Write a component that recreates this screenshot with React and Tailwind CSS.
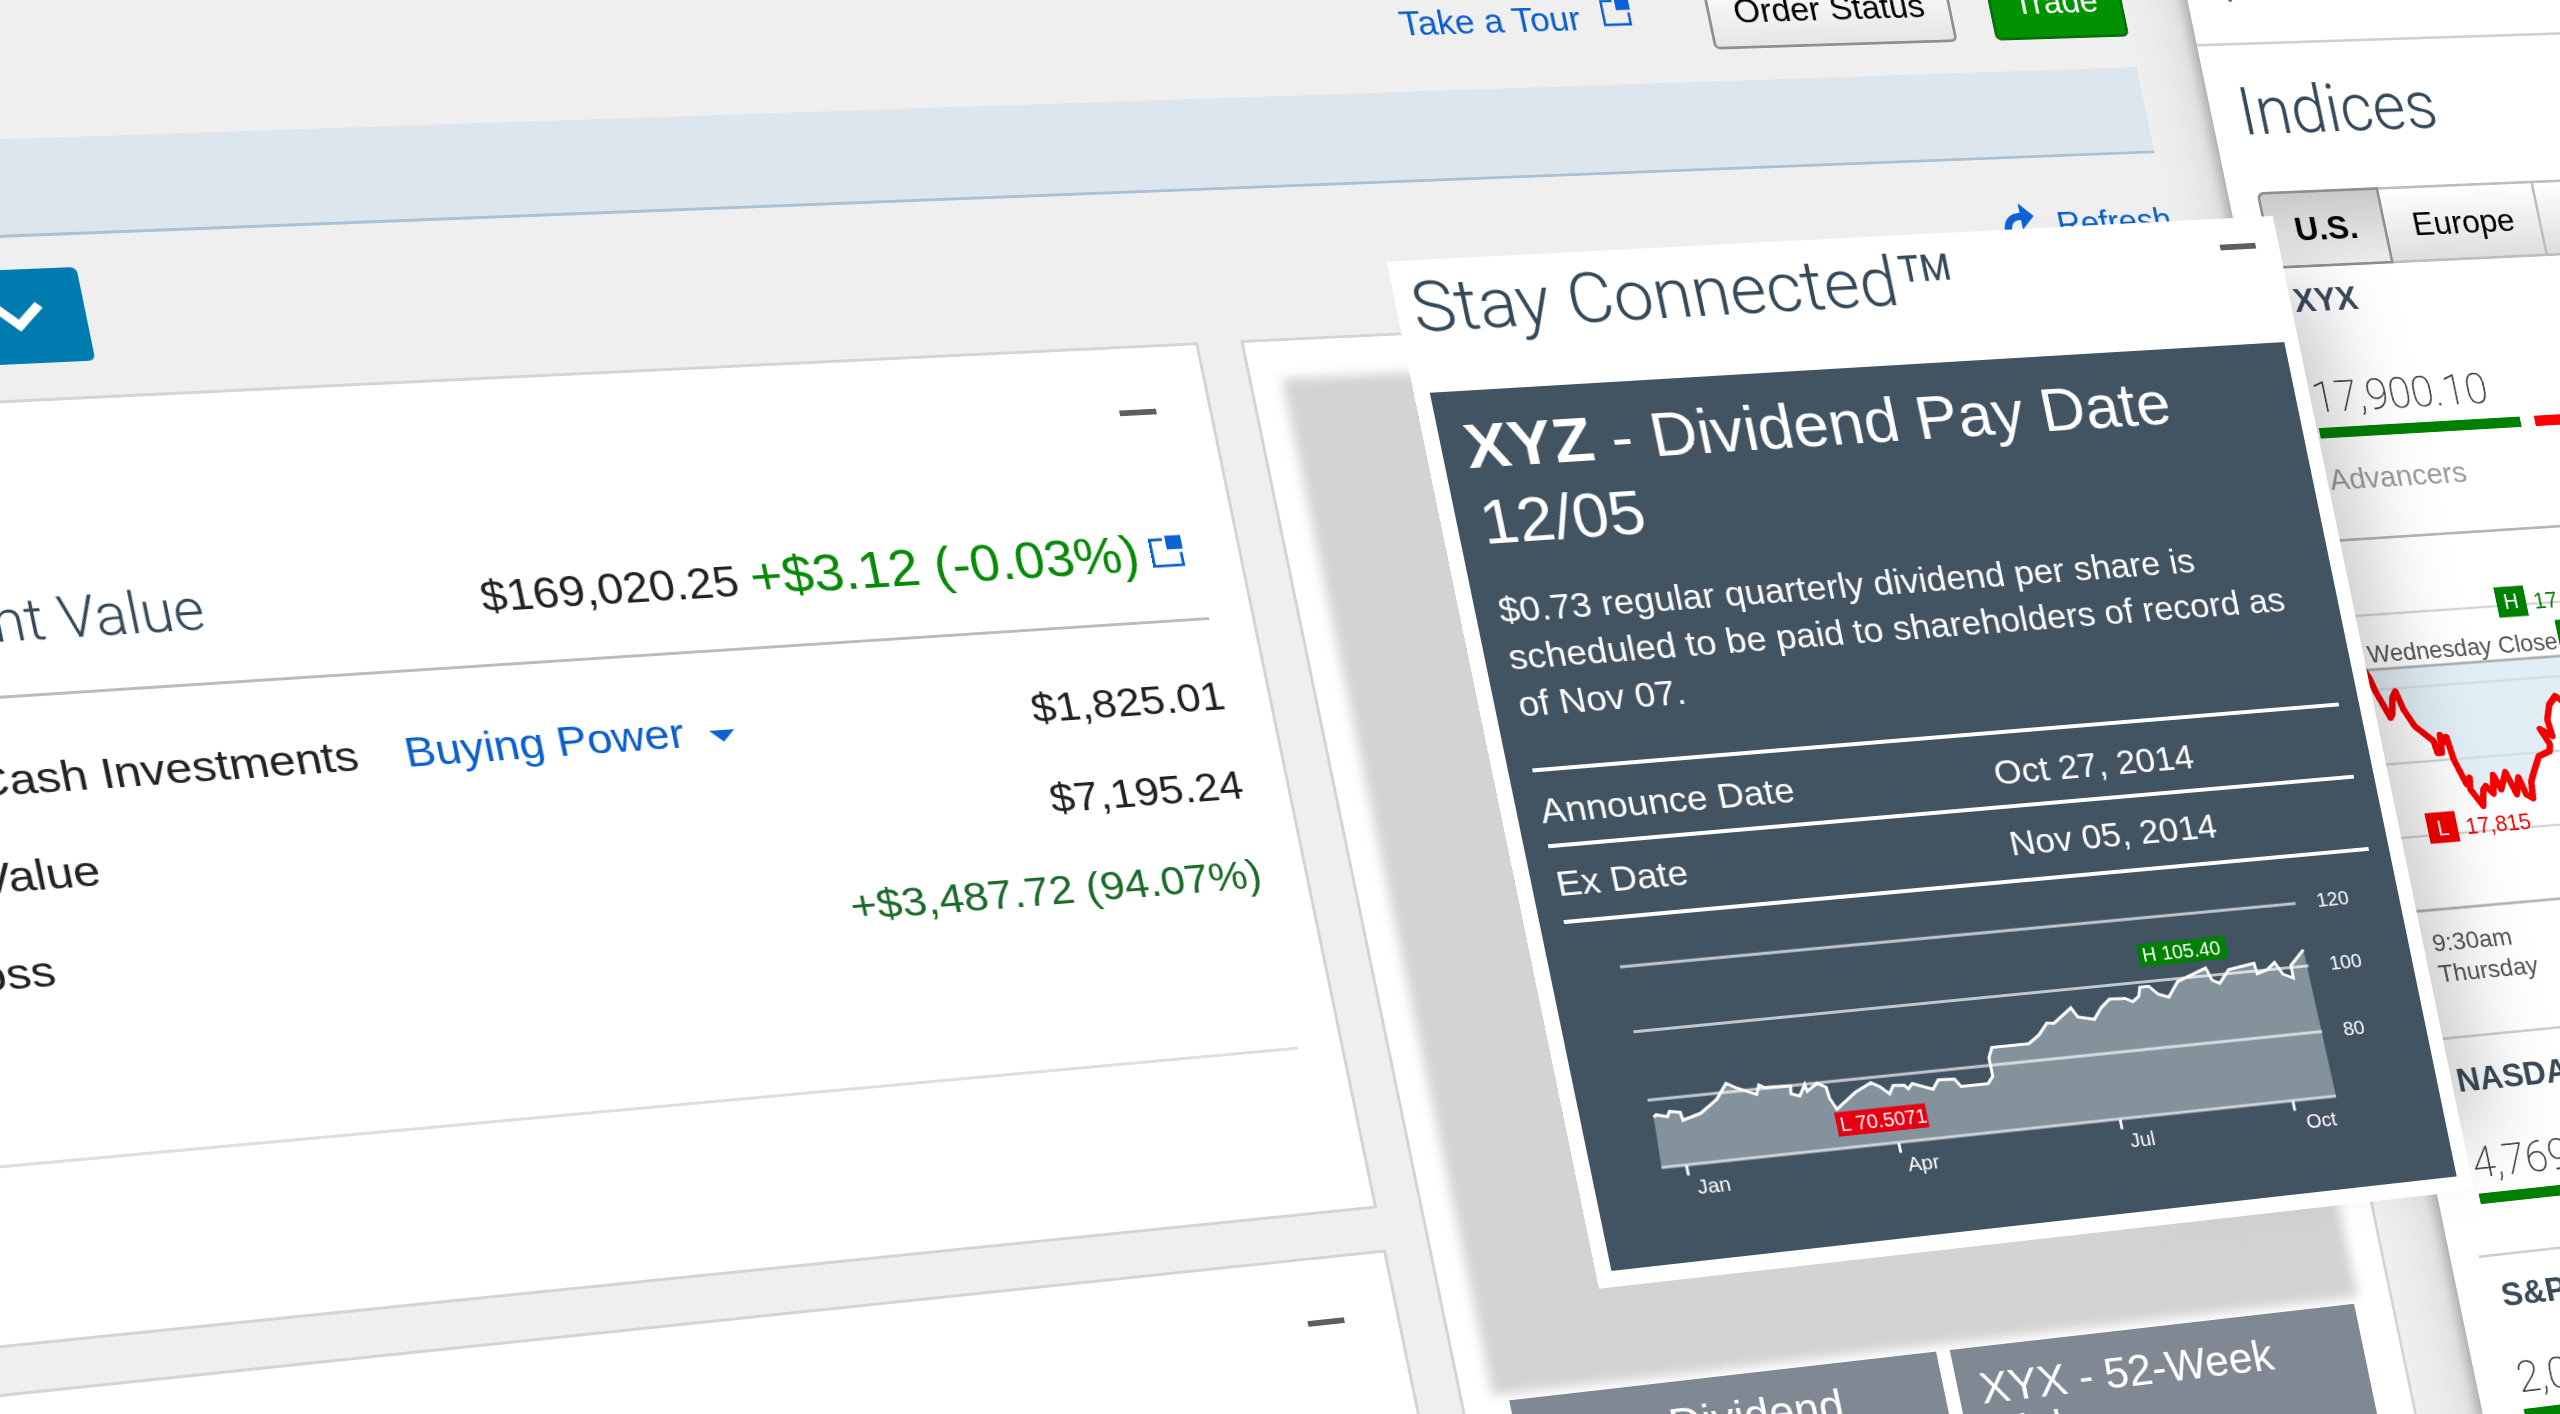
import React from "react";

/* Solves the homography that carries a w × h box (starting at x = left) onto four screen corners. */
function projection(left, w, h, corners) {
  const source = [[left, 0], [left + w, 0], [left + w, h], [left, h]];
  const rows = [];
  source.forEach(([x, y], i) => {
    const [u, v] = corners[i];
    rows.push([x, y, 1, 0, 0, 0, -u * x, -u * y, u]);
    rows.push([0, 0, 0, x, y, 1, -v * x, -v * y, v]);
  });
  for (let c = 0; c < 8; c++) {
    let p = c;
    for (let r = c + 1; r < 8; r++) if (Math.abs(rows[r][c]) > Math.abs(rows[p][c])) p = r;
    [rows[c], rows[p]] = [rows[p], rows[c]];
    for (let r = 0; r < 8; r++) {
      if (r === c) continue;
      const f = rows[r][c] / rows[c][c];
      for (let k = c; k < 9; k++) rows[r][k] -= f * rows[c][k];
    }
  }
  const [a, b, c, d, e, f, g, i] = rows.map((r, n) => r[8] / r[n]);
  return `matrix3d(${[a, d, 0, g, b, e, 0, i, 0, 0, 1, 0, c, f, 0, 1].join(",")})`;
}

const PAGE = projection(300, 2200, 1470, [[0, 0], [2175.5, -56.5], [2444.35, 1230.5], [300.7, 1466.85]]);
const CARD = projection(0, 880, 1027, [[1386.6, 261.7], [2272.7, 216], [2474, 1190], [1599, 1288.7]]);

const Minimize = ({ className = "" }) => <div className={`h-[6px] w-[37px] bg-[#5e5e5e] ${className}`} />;

const PopOut = ({ className = "" }) => (
  <svg viewBox="0 0 35 35" className={className} fill="none">
    <path d="M15 4H1.5V33.5H32.5V19" stroke="#0a5fce" strokeWidth="3" />
    <rect x="18" y="0" width="17" height="15.5" fill="#0a62d6" />
  </svg>
);

function Header() {
  return (
    <header className="flex h-[139px] items-start justify-end pr-[75px] pt-[22px] text-[37px]">
      <span className="mr-[24px] mt-[3px] leading-[81px] text-[#0b5fcc]">Take a Tour</span>
      <PopOut className="mr-[82px] mt-[21px] h-[32px] w-[31px]" />
      <button className="mr-[43px] h-[82px] w-[268px] rounded-[7px] border-[3px] border-[#8f8f8f] bg-linear-to-b from-white to-[#e6e6e6] leading-[76px] text-black">Order Status</button>
      <button className="h-[82px] w-[151px] rounded-[7px] border-[3px] border-[#0b6e0b] bg-[#009200] leading-[76px] text-white">Trade</button>
    </header>
  );
}

function Toolbar() {
  return (
    <div className="flex h-[162px] items-start justify-between">
      <div className="mt-[33px] flex h-[94px] w-[319px] items-start justify-end rounded-[6px] bg-[#007bb0] pr-[35px] pt-[31px]">
        <svg viewBox="0 0 50 32" className="h-[32px] w-[50px]" fill="none">
          <path d="M5 5L25 25L45 5" stroke="#fff" strokeWidth="8.5" />
        </svg>
      </div>
      <div className="mr-[71px] mt-[51px] flex items-start text-[#0b5fcc]">
        <svg viewBox="0 0 36 44" className="mr-[24px] h-[44px] w-[36px]">
          <path d="M21 0L36 15L21 30V19C11 19 7 24 9 44H1C-2 22 6 11 21 11Z" fill="#0a62d6" />
        </svg>
        <span className="mt-[6px] text-[37px] leading-[40px]">Refresh</span>
      </div>
    </div>
  );
}

const ROWS = [
  { label: "Cash Investments", box: "w-[481px]", value: "$1,825.01", tone: "text-[#222]", menu: true },
  { label: "Value", box: "w-[231px]", value: "$7,195.24", tone: "text-[#222]" },
  { label: "Loss", box: "w-[174px]", value: "+$3,487.72 (94.07%)", tone: "text-[#1a6b2a]" },
];

function AccountPanel() {
  return (
    <section className="h-[926px] border-y-[3px] border-r-[3px] border-[#d4d4d4] bg-white pr-[43px]">
      <div className="flex justify-end pr-[10px] pt-[65px]"><Minimize /></div>
      <div className="mt-[114px] flex h-[103px] items-baseline justify-between whitespace-nowrap leading-[60px]">
        <h2 className="flex w-[370px] justify-end font-[Roboto,sans-serif] text-[58px] font-light text-[#34495a]">
          <span className="origin-right scale-x-[0.92]">Account Value</span>
        </h2>
        <div className="flex items-baseline">
          <span className="mr-[12px] text-[43.7px] text-[#222]">$169,020.25</span>
          <span className="mr-[12px] text-[53px] text-[#078a07]">+$3.12 (-0.03%)</span>
          <PopOut className="mr-[12px] mt-[12px] h-[34px] w-[33px] self-start" />
        </div>
      </div>
      <div className="h-[3px] bg-[#bbb]" />
      <div className="mt-[33px] text-[43px] leading-[95px]">
        {ROWS.map((r) => (
          <div key={r.label} className="flex h-[95px] items-center justify-between whitespace-nowrap">
            <div className="flex items-center">
              <span className={`flex justify-end text-[#222] ${r.box}`}>{r.label}</span>
              {r.menu && (
                <>
                  <a className="ml-[43px] text-[42.3px] text-[#0b5fcc]">Buying Power</a>
                  <svg viewBox="0 0 24 12" className="ml-[24px] mt-[11px] h-[12px] w-[24px]"><path d="M0 0H24L12 12Z" fill="#0a62d6" /></svg>
                </>
              )}
            </div>
            <span className={`pr-px text-[43.4px] ${r.tone}`}>{r.value}</span>
          </div>
        ))}
      </div>
      <div className="mt-[137px] h-[3px] bg-[#dedede]" />
    </section>
  );
}

const Tile = ({ lines }) => (
  <div className="h-[300px] w-[455px] bg-[#808993] pl-[24px] pt-[21px] text-[47.7px] leading-[50px] text-white">
    {lines.map((l) => <div key={l}>{l}</div>)}
  </div>
);

function Panels() {
  return (
    <div className="flex gap-[43px]">
      <div className="flex w-[1362px] flex-col gap-[44px]">
        <AccountPanel />
        <section className="h-[440px] border-r-[3px] border-t-[3px] border-[#d4d4d4] bg-white">
          <div className="flex justify-end pr-[53px] pt-[63px]"><Minimize /></div>
        </section>
      </div>
      <section className="h-[1400px] w-[1020px] border-[3px] border-[#d4d4d4] bg-white pl-[31px] pt-[40px]">
        <div className="h-[1092px] w-[947px] bg-[#d3d3d3] blur-[6px]" />
        <div className="relative ml-[16px] mt-[7px] flex gap-[15px]">
          <Tile lines={["XYZ - Dividend", "Pay Date"]} />
          <Tile lines={["XYX - 52-Week", "High"]} />
        </div>
      </section>
    </div>
  );
}

const INDEX_LINE = "2236,822 2246,843 2250,859 2261,890 2264,886 2268,868 2273,861 2278,882 2287,902 2305,920 2307,934 2312,934 2314,914 2318,922 2321,917 2324,943 2333,972 2338,965 2336,978 2347,998 2351,980 2355,976 2362,985 2366,964 2372,981 2381,962 2389,988 2395,969 2400,989 2407,994 2409,975 2414,965 2424,947 2438,942 2440,934 2432,916 2445,925 2443,906 2449,889 2458,880 2463,884 2480,905";

function IndexChart() {
  return (
    <svg viewBox="2200 687.5 500 424.5" className="block h-[424.5px] w-[500px] font-['Liberation_Sans',sans-serif]">
      <path d="M2200 772.5H2700M2200 857.5H2700M2200 942.5H2700M2200 1026.5H2700" stroke="#d2d2d2" strokeWidth="2.4" />
      <polygon points={`2230,834.5 ${INDEX_LINE} 2480,834.5`} fill="#cfe3ef" fillOpacity="0.62" />
      <path d="M2200 834.5H2700" stroke="#adadad" strokeWidth="3.2" />
      <path d="M2200 1110.5H2700" stroke="#b2b2b2" strokeWidth="3" />
      <polyline points={INDEX_LINE} fill="none" stroke="#f50000" strokeWidth="7.5" strokeLinejoin="round" />
      <text x="2250" y="826.5" fontSize="27.7" fill="#555">Wednesday Close</text>
      <rect x="2412" y="751" width="35" height="35" fill="#008000" />
      <text x="2429.5" y="777" fontSize="24" fill="#fff" textAnchor="middle">H</text>
      <text x="2456" y="778.5" fontSize="25.5" fill="#008000">17,936</text>
      <rect x="2476" y="793" width="35" height="30" fill="#008000" />
      <rect x="2277" y="1001" width="35" height="35" fill="#f50000" />
      <text x="2295" y="1027.5" fontSize="24" fill="#fff" textAnchor="middle">L</text>
      <text x="2322" y="1028.5" fontSize="25" fill="#f50000">17,815</text>
    </svg>
  );
}

const IndexName = ({ children, className }) => <h3 className={`pl-[50px] text-[37px] font-bold leading-[40px] text-[#3a4b5b] ${className}`}>{children}</h3>;

const IndexValue = ({ children, className }) => (
  <div className={`flex pl-[48px] font-[Roboto,sans-serif] text-[49px] font-extralight leading-[50px] text-[#3c3c3c] ${className}`}>
    <span className="origin-left scale-x-[0.985]">{children}</span>
  </div>
);

function Indices() {
  return (
    <aside className="h-[1800px] w-[500px] overflow-visible whitespace-nowrap bg-white shadow-[-4px_0_14px_rgba(0,0,0,0.28),-10px_0_60px_rgba(0,0,0,0.13)]">
      <div className="flex h-[118px] items-start border-b-[3px] border-[#d0d0d0] pl-[38px] pt-[56px]">
        <svg viewBox="0 0 22 13" className="h-[13px] w-[22px]"><path d="M0 0H22L11 13Z" fill="#555" /></svg>
      </div>
      <h2 className="mt-[36px] flex pl-[32px] font-[Roboto,sans-serif] text-[76px] font-light leading-[80px] text-[#34495a]">
        <span className="origin-left scale-x-[0.97]">Indices</span>
      </h2>
      <div className="ml-[33px] mt-[52px] flex text-[37.5px] leading-[82px] text-black">
        <div className="h-[88px] w-[142px] rounded-tl-[8px] border-[3px] border-[#8e8e8e] bg-linear-to-b from-[#c9c9c9] via-[#dcdcdc] to-[#ececec] pl-[2px] text-center font-bold">U.S.</div>
        <div className="h-[88px] w-[184px] border-y-[3px] border-r-[3px] border-[#bdbdbd] bg-linear-to-b from-white to-[#dedede] pl-[3px] text-center">Europe</div>
        <div className="h-[88px] w-[141px] border-y-[3px] border-[#bdbdbd] bg-linear-to-b from-white to-[#dedede] text-center">Asia</div>
      </div>
      <IndexName className="mt-[18px]">XYX</IndexName>
      <IndexValue className="mt-[66px]">17,900.10</IndexValue>
      <div className="mt-[9px] flex gap-[17px] pl-[48px]">
        <div className="h-[12px] w-[237px] bg-[#008000]" />
        <div className="h-[12px] flex-1 bg-[#ff0000]" />
      </div>
      <div className="mt-[27px] pl-[48px] text-[34px] leading-[40px] text-[#9b9b9b]">Advancers</div>
      <div className="mt-[48px] h-[3px] bg-[#b5b5b5]" />
      <IndexChart />
      <div className="mt-[18px] pl-[55px] text-[28px] leading-[35px] text-[#555]">
        <div>9:30am</div>
        <div>Thursday</div>
      </div>
      <div className="mt-[54px] h-[3px] bg-[#d0d0d0]" />
      <IndexName className="mt-[28px]">NASDAQ</IndexName>
      <IndexValue className="mt-[49px]">4,769.46</IndexValue>
      <div className="ml-[48px] mt-[9px] h-[12px] bg-[#008000]" />
      <div className="ml-[33px] mt-[57px] h-[3px] bg-[#d0d0d0]" />
      <IndexName className="mt-[25px]">S&amp;P 500</IndexName>
      <IndexValue className="mt-[49px]">2,018.05</IndexValue>
      <div className="ml-[48px] mt-[10px] h-[12px] bg-[#008000]" />
    </aside>
  );
}

const PRICE_LINE = "84,865 87,863 97,866 100,861 110,863 111,871 129,866 147,854 159,839 167,844 186,853 190,844 195,847 220,848 219,856 227,859 234,848 235,855 246,848 254,853 255,864 260,876 281,861 298,853 306,858 314,866 319,858 330,859 333,863 338,858 357,866 364,857 380,858 385,866 412,866 418,859 418,840 423,830 460,830 472,822 482,811 489,812 509,798 514,808 530,812 539,801 549,793 565,794 572,798 579,793 582,784 591,784 599,793 609,797 621,782 652,771 656,784 663,788 675,775 702,771 703,782 714,779 723,772 729,785 739,790 739,777 755,762";

function PriceChart() {
  return (
    <svg viewBox="15.5 666.5 850 344" className="-ml-[22px] block h-[344px] w-[850px] font-['Liberation_Sans',sans-serif]">
      <polygon points={`${PRICE_LINE} 757.5,915.5 81.5,915.5`} fill="#84929b" />
      <path d="M81.5 713.8H757M81.5 779H757M81.5 847.7H757M81.5 915.5H757.5" stroke="#fff" strokeOpacity="0.68" strokeWidth="3" />
      <polyline points={PRICE_LINE} fill="none" stroke="#fff" strokeWidth="3" />
      <path d="M105.5 916V926M313 916V926M535 916V926M712.5 916V926" stroke="#fff" strokeWidth="2.8" />
      <rect x="587" y="740" width="90.5" height="23.5" fill="#008000" />
      <rect x="256.5" y="879" width="89.5" height="24.5" fill="#e60012" />
      <g fill="#fff" fontSize="20">
        <text x="591" y="758.5" fontSize="19.7">H 105.40</text>
        <text x="260" y="898.5" fontSize="19.4">L 70.5071</text>
        <text x="779" y="719.5">120</text>
        <text x="779" y="785.5">100</text>
        <text x="779" y="854.5">80</text>
        <text x="111.5" y="945.5">Jan</text>
        <text x="317.5" y="945.5">Apr</text>
        <text x="540.5" y="945.5">Jul</text>
        <text x="722" y="945.5">Oct</text>
      </g>
    </svg>
  );
}

function StayConnected() {
  return (
    <div className="h-[1027px] w-[880px] whitespace-nowrap bg-white">
      <div className="flex h-[131.5px] items-start justify-between pl-[15px] pr-[24px]">
        <h1 className="mt-[7px] flex origin-left scale-x-[0.975] font-[Roboto,sans-serif] text-[70px] font-light leading-[80px] text-[#34495a]">
          Stay Connected<span className="mt-[12px] text-[103px]">™</span>
        </h1>
        <Minimize className="mt-[27px] w-[34px]" />
      </div>
      <div className="ml-[15px] h-[879px] w-[850px] bg-[#425362] px-[22.5px] pt-[17px] text-white">
        <h2 className="text-[62.7px] leading-[76px]"><b>XYZ</b> - Dividend Pay Date<br />12/05</h2>
        <p className="mt-[28.5px] text-[35.2px] leading-[46.8px]">
          $0.73 regular quarterly dividend per share is<br />scheduled to be paid to shareholders of record as<br />of Nov 07.
        </p>
        <div className="mt-[40.5px] w-[806px] border-t-4 text-[35.4px]">
          <div className="flex h-[76.3px] border-b-4 leading-[78px]">
            <span className="w-[444px] text-[35.6px]">Announce Date</span><span>Oct 27, 2014</span>
          </div>
          <div className="flex h-[76.3px] border-b-4 leading-[73px]">
            <span className="w-[445px] pl-px">Ex Date</span><span>Nov 05, 2014</span>
          </div>
        </div>
        <PriceChart />
      </div>
    </div>
  );
}

export default function App() {
  return (
    <div className="relative h-[1414px] w-[2560px] overflow-hidden bg-[#efefef] font-['Liberation_Sans',Arial,sans-serif]">
      <div className="flex h-[1800px] w-[3000px] origin-top-left bg-[#efefef]" style={{ transform: PAGE }}>
        <main className="w-[2500px]">
          <Header />
          <div className="mr-[74px] h-[98px] border-b-[3px] border-[#a8c1d5] bg-[#dde5ed]" />
          <div className="-mt-px"><Toolbar /></div>
          <Panels />
        </main>
        <Indices />
      </div>
      <div className="absolute left-0 top-0 origin-top-left" style={{ transform: CARD }}>
        <div className="absolute left-[560px] top-[70px] h-[905px] w-[350px] bg-black/20 blur-[40px]" />
        <div className="relative"><StayConnected /></div>
      </div>
    </div>
  );
}
